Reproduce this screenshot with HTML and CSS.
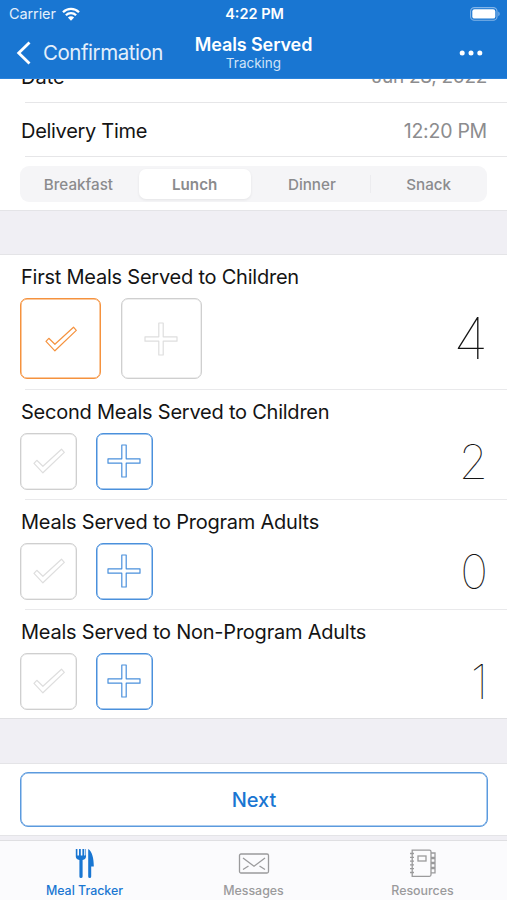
FILE: index.html
```html
<!DOCTYPE html>
<html lang="en">
<head>
<meta charset="utf-8">
<title>Meals Served</title>
<link rel="stylesheet" href="styles.css">
</head>
<body>
<svg class="defs" width="0" height="0">
  <symbol id="check" viewBox="0 0 32 26"><path d="M1 15.4 3.8 12.3 9.9 18.3 28.5 1.2 31.3 4.4 9.9 24.8Z" fill="none" stroke="currentColor" stroke-width="1.2" stroke-linejoin="round"/></symbol>
  <symbol id="plus" viewBox="0 0 34 34"><path d="M14.8 1H19.2V14.8H33V19.2H19.2V33H14.8V19.2H1V14.8H14.8Z" fill="none" stroke="currentColor" stroke-width="1.2" stroke-linejoin="round"/></symbol>
</svg>
<div class="app">
  <header class="header">
    <div class="status">
      <div class="carrier"><span>Carrier</span>
        <svg width="18" height="14" viewBox="0 0 18 14"><g fill="none" stroke="#fff" stroke-width="2.3"><path d="M1 5.2a11.3 11.3 0 0 1 16 0"/><path d="M3.9 8.3a7.2 7.2 0 0 1 10.2 0"/></g><path d="M9 13.7 5.9 10.5a4.4 4.4 0 0 1 6.2 0Z" fill="#fff"/></svg>
      </div>
      <div class="clock">4:22 PM</div>
      <svg class="battery" width="30" height="14" viewBox="0 0 30 14"><rect x=".6" y=".6" width="26.4" height="12.6" rx="3.8" fill="none" stroke="#83b5e8" stroke-width="1.1"/><rect x="2.3" y="2.2" width="23" height="9.4" rx="2.2" fill="#fff"/><path d="M28.3 4.6q1.4.8 1.4 2.3t-1.4 2.3Z" fill="#83b5e8"/></svg>
    </div>
    <div class="nav">
      <div class="back"><svg width="15" height="24" viewBox="0 0 15 24"><path d="M13.5 1.4 2.7 12 13.5 22.6" fill="none" stroke="#fff" stroke-width="2.8"/></svg><span>Confirmation</span></div>
      <div class="titles"><div class="title">Meals Served</div><div class="subtitle">Tracking</div></div>
      <svg class="more" width="24" height="6" viewBox="0 0 24 6" fill="#fff"><circle cx="3.2" cy="3" r="2.5"/><circle cx="12" cy="3" r="2.5"/><circle cx="20.8" cy="3" r="2.5"/></svg>
    </div>
  </header>
  <main class="main">
    <section class="info">
      <div class="row date"><span>Date</span><span class="value date-value">Jun 28, 2022</span></div>
      <div class="row time"><span class="delivery">Delivery Time</span><span class="value time-value">12:20 PM</span></div>
      <div class="segments">
        <div class="segment">Breakfast</div><div class="segment selected">Lunch</div><div class="segment">Dinner</div><div class="segment divided">Snack</div>
      </div>
    </section>
    <section class="meals">
      <div class="meal large">
        <div class="label">First Meals Served to Children</div>
        <div class="controls"><div class="box orange"><svg class="check"><use href="#check"/></svg></div><div class="box off"><svg class="plus"><use href="#plus"/></svg></div><div class="count">4</div></div>
      </div>
      <div class="meal">
        <div class="label">Second Meals Served to Children</div>
        <div class="controls"><div class="box off"><svg class="check"><use href="#check"/></svg></div><div class="box blue"><svg class="plus"><use href="#plus"/></svg></div><div class="count">2</div></div>
      </div>
      <div class="meal">
        <div class="label">Meals Served to Program Adults</div>
        <div class="controls"><div class="box off"><svg class="check"><use href="#check"/></svg></div><div class="box blue"><svg class="plus"><use href="#plus"/></svg></div><div class="count">0</div></div>
      </div>
      <div class="meal">
        <div class="label">Meals Served to Non-Program Adults</div>
        <div class="controls"><div class="box off"><svg class="check"><use href="#check"/></svg></div><div class="box blue"><svg class="plus"><use href="#plus"/></svg></div><div class="count">1</div></div>
      </div>
    </section>
    <section class="action"><div class="next">Next</div></section>
  </main>
  <footer class="tabs">
    <div class="tab active">
      <svg width="20" height="31" viewBox="0 0 20 31" fill="currentColor"><path d="M.8 1H2.4V7.5H4V1H5.8V7.5H7.4V1H9.2V7.5Q10.4 7.5 10.4 7V1H11V8.5Q11 11.4 7.6 12V28.5Q7.6 30 6 30T4.4 28.5V12Q.8 11.4.8 8.5Z"/><path d="M13.2 1C17 3.2 18.8 10 18.8 18.5H16.2V28.5Q16.2 30 14.7 30T13.2 28.5Z"/></svg>
      <span>Meal Tracker</span>
    </div>
    <div class="tab">
      <svg width="32" height="31" viewBox="0 0 32 31" fill="none" stroke="currentColor" stroke-width="1.3"><rect x="1.5" y="6" width="29" height="19" rx="1.5"/><path d="M5 10 16 18.2 27 10M5 21.5 10.5 18M27 21.5 21.5 18"/></svg>
      <span>Messages</span>
    </div>
    <div class="tab">
      <svg width="28" height="31" viewBox="0 0 28 31" fill="none" stroke="currentColor" stroke-width="1.3"><path d="M3.2 2.2H20.5Q22 2.2 22 3.7V26.8Q22 28.3 20.5 28.3H3.2Z"/><path d="M1 5.5H5M1 9.3H5M1 13.1H5M1 16.9H5M1 20.7H5M1 24.5H5M22 5H26V9.5H22M22 10.5H26V14.5H22M22 15.5H26V19.5H22M22 20.5H26V24.8H22"/><rect x="9" y="8" width="8" height="5"/></svg>
      <span>Resources</span>
    </div>
  </footer>
</div>
</body>
</html>
```

FILE: styles.css
```css
* { box-sizing: border-box; }
body { margin: 0; font-family: Inter, "Liberation Sans", sans-serif; color: #141414; }
svg { display: block; flex: none; }
.defs { position: absolute; }
.app { width: 507px; height: 900px; display: flex; flex-direction: column; overflow: hidden; background: #f0eff4; }
.header { height: 79px; flex: none; background: #1976d2; color: #fff; border-bottom: 1px solid #2a83dc; }
.status { height: 27px; display: grid; grid-template-columns: 1fr auto 1fr; align-items: center; padding: 0 7px 0 9px; }
.carrier { display: flex; align-items: center; gap: 6px; font-size: 14.5px; letter-spacing: -0.1px; color: #e3effb; }
.clock { font-size: 14.5px; font-weight: 600; }
.battery { justify-self: end; }
.nav { height: 51px; display: grid; grid-template-columns: 1fr auto 1fr; align-items: center; padding: 0 16px; }
.back { display: flex; align-items: center; gap: 12px; font-size: 20.5px; letter-spacing: -0.47px; color: #e3effb; }
.titles { text-align: center; }
.title { font-size: 18px; line-height: 21px; font-weight: 600; letter-spacing: -0.1px; }
.subtitle { font-size: 13.5px; line-height: 16px; color: #d0e3f7; }
.more { justify-self: end; margin-right: 8px; }
.main { flex: none; height: 761px; overflow: hidden; }
.info { display: flow-root; height: 132px; background: #fff; border-bottom: 1px solid #e4e4e7; }
.row { display: flex; justify-content: space-between; margin-left: 25px; padding-right: 20px; border-bottom: 1px solid #e6e6e8; font-size: 20px; line-height: 24px; }
.row span:first-child { margin-left: -4px; }
.date { height: 54px; margin-top: -30px; padding-top: 16px; }
.time { height: 54px; padding-top: 16px; }
.delivery { letter-spacing: -0.3px; }
.value { color: #8c8c8e; }
.date-value { font-size: 19px; letter-spacing: -0.3px; }
.time-value { font-size: 19.5px; letter-spacing: -0.25px; }
.segments { height: 36px; margin: 9px 20px 0; padding: 3px 0; display: grid; grid-template-columns: repeat(4, 1fr); background: #f5f5f7; border-radius: 9px; }
.segment { display: flex; align-items: center; justify-content: center; font-size: 15.2px; font-weight: 500; color: #8b8b8d; }
.selected { margin: 0 3px 0 2px; background: #fff; border-radius: 7px; box-shadow: 0 1px 3px #00000012; font-weight: 600; }
.divided { background: linear-gradient(#ececef, #ececef) 0 50% / 1px 18px no-repeat; }
.meals { margin-top: 43px; height: 465px; border-top: 1px solid #e4e4e7; border-bottom: 1px solid #e0e0e3; background: #fff; }
.meal { height: 110px; padding: 9px 19px 0 21px; background: linear-gradient(#e9e9eb, #e9e9eb) 25px 100% / 482px 1px no-repeat; }
.meal:last-child { background: none; }
.meal.large { height: 135px; }
.label { width: max-content; font-size: 20px; line-height: 26px; letter-spacing: -0.23px; }
.controls { display: flex; align-items: center; gap: 19px; margin: 8px 0 0 -1px; }
.box { width: 57px; height: 57px; display: flex; align-items: center; justify-content: center; padding-bottom: 1px; border: 1.5px solid; border-radius: 7px; box-shadow: inset 0 0 0 .5px currentColor; }
.large .box { width: 81px; height: 81px; padding-bottom: 0; }
.large .off { margin-left: 1px; padding-right: 1px; }
.check { width: 32px; height: 26px; }
.plus { width: 34px; height: 34px; }
.blue .plus { margin-right: 1px; }
.orange { color: #f5923e; }
.blue { color: #4a90dc; }
.off { border-color: #cfcfcf; color: #dedede; }
.count { margin-left: auto; font-size: 47px; line-height: 57px; font-weight: 100; }
.large .count { font-size: 58px; }
.action { height: 73px; margin-top: 44px; padding: 8px 19px 0 20px; border-top: 1px solid #e4e4e7; border-bottom: 1px solid #e4e4e7; background: #fff; }
.next { height: 55px; border: 1.5px solid #5b9ade; box-shadow: inset 0 0 0 .5px #5b9ade; border-radius: 8px; display: flex; align-items: center; justify-content: center; color: #1976d2; font-size: 20px; font-weight: 500; }
.tabs { height: 60px; flex: none; display: grid; grid-template-columns: repeat(3, 1fr); background: #fbfbfd; border-top: 1px solid #dfdfe2; }
.tab { display: flex; flex-direction: column; align-items: center; padding-top: 7px; color: #9a9a9c; font-size: 12.4px; line-height: 16px; font-weight: 500; gap: 4px; }
.active { color: #1976d2; }
```
